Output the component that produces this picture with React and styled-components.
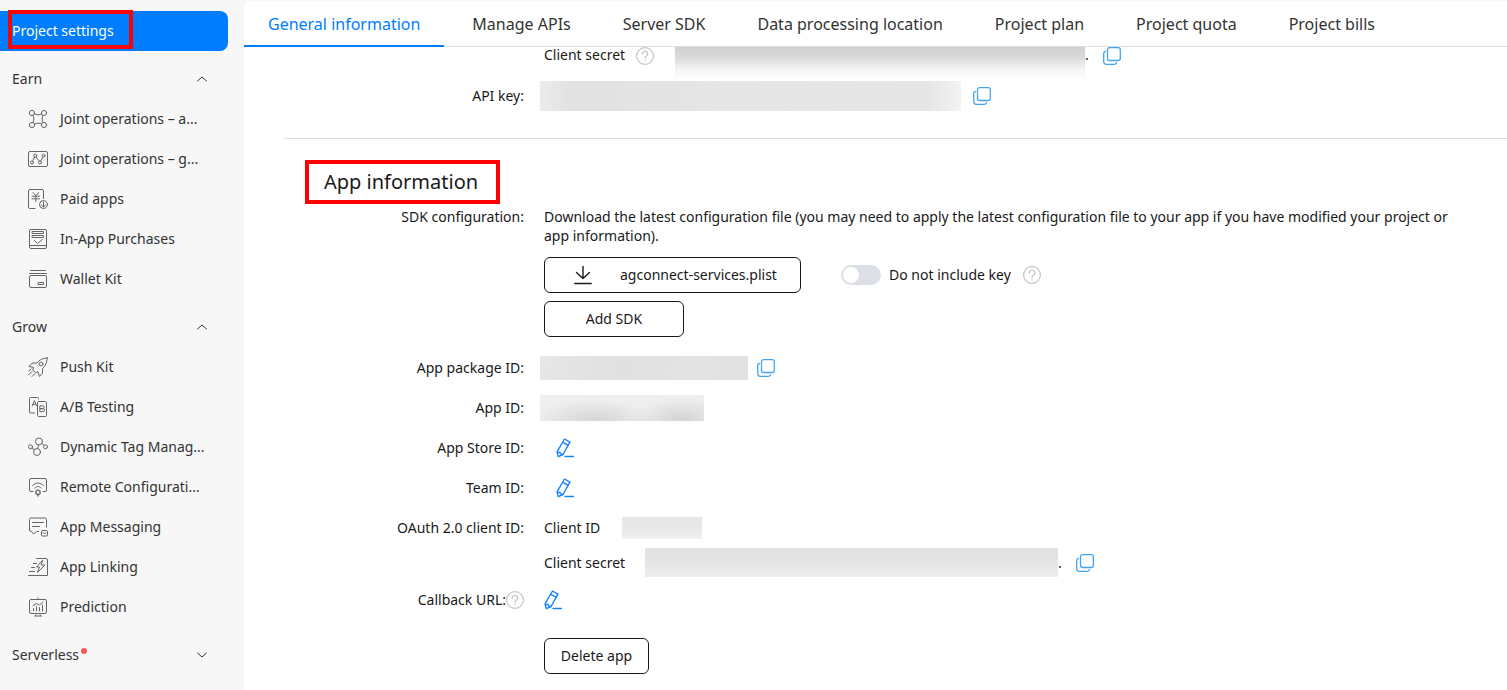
import { useState } from "react";
import styled, { createGlobalStyle } from "styled-components";

const strokeProps = {
  fill: "none",
  stroke: "currentColor",
  strokeLinecap: "round",
  strokeLinejoin: "round",
};

const sideIcons = {
  jointApps: (
    <>
      <circle cx="4" cy="4" r="2.6" />
      <circle cx="16" cy="4" r="2.6" />
      <circle cx="4" cy="16" r="2.6" />
      <circle cx="16" cy="16" r="2.6" />
      <path d="M6.500 5c2 1.200 5 1.200 7 0M6.500 15c2-1.200 5-1.200 7 0M5 6.500c1.200 2 1.200 5 0 7M15 6.500c-1.200 2-1.200 5 0 7" />
    </>
  ),
  jointGames: (
    <>
      <rect x="0.5" y="2.500" width="19" height="15" rx="1.500" />
      <circle cx="4" cy="13.500" r="1.500" />
      <circle cx="7.200" cy="6.700" r="1.500" />
      <circle cx="12" cy="13.500" r="1.500" />
      <circle cx="15.500" cy="6.700" r="1.500" />
      <path d="M4.600 12L6.600 8.200M8 8.200l3.300 4M12.600 12l2.200-3.900" />
    </>
  ),
  paid: (
    <>
      <path d="M7 19.500H2A1.500 1.500 0 0 1 .5 18V2A1.500 1.500 0 0 1 2 .5h12A1.500 1.500 0 0 1 15.500 2v7.500" />
      <path d="M5 3.500l2.800 3.200 2.800-3.200M4 7.200h7.600M4 9.800h7.600M7.800 6.700v6" />
      <circle cx="15.500" cy="15.500" r="4" />
      <path d="M15.500 13v5M13.700 16l1.800 2 1.800-2" />
    </>
  ),
  purchases: (
    <>
      <rect x="1.500" y="0.500" width="17" height="19" rx="1.500" />
      <path d="M1.500 16.500h17" />
      <rect x="4.500" y="2.500" width="11" height="2" />
      <rect x="4.500" y="6.500" width="11" height="2" />
      <path d="M6.500 11.500l3 3 5-4" />
    </>
  ),
  wallet: (
    <>
      <path d="M2.500 1.500h15M1.500 4.500h17" />
      <rect x="1.500" y="6.500" width="17" height="12" rx="1.500" />
      <rect x="10.500" y="13.500" width="5" height="2" />
    </>
  ),
  rocket: (
    <>
      <path d="M19.300.8c-5 .4-8 2.200-10.300 5.200L4 6.200 1 9.500l4.500 1-.8 2.500 2.700 2.500 2.500-.8 1.600 4.800 3-3.500.1-4.500c2.900-2.700 4.300-6 4.700-10.700z" />
      <circle cx="13" cy="7" r="1.900" />
      <path d="M4 14.500L.5 18M7 16.500l-3 3M3 12L.8 14.300" />
    </>
  ),
  ab: (
    <>
      <path d="M6.500 16H2.500A1 1 0 0 1 1.500 15V1.500a1 1 0 0 1 1-1H9.500a1 1 0 0 1 1 1V2" />
      <rect x="9.500" y="4.500" width="9" height="15" rx="1" />
      <path d="M4.200 9L6.400 3.500 8.600 9M5 7.300h2.800M12.200 8.800h2.500a1.400 1.400 0 0 1 0 2.900h-2.500zM12.200 11.700h2.900a1.500 1.500 0 0 1 0 3h-2.900z" />
    </>
  ),
  dynamicTag: (
    <>
      <circle cx="11" cy="4.500" r="3.500" />
      <circle cx="2.500" cy="9.800" r="2" />
      <circle cx="17.500" cy="9.800" r="2" />
      <circle cx="9" cy="15" r="3.500" />
      <path d="M10.500 8l-.8 3.500M4 11.200l2.200 1.600M14 6.500l2 1.800" />
    </>
  ),
  remote: (
    <>
      <path d="M5 14.500H3A1.500 1.500 0 0 1 1.500 13V3A1.500 1.500 0 0 1 3 1.500h14A1.500 1.500 0 0 1 18.500 3v10a1.500 1.500 0 0 1-1.500 1.500h-2" />
      <path d="M4.500 8.500c3.500-3.300 7.500-3.300 11 0M6.800 11c2.200-2 4.200-2 6.400 0" />
      <path d="M8 14.200l2-1.200 2 1.200v2.500l-2 1.200-2-1.200zM10 18v1" strokeWidth="1.400" />
    </>
  ),
  messaging: (
    <>
      <path d="M10.500 14.500H8.500L5.500 17l-2-2.500H3A1.500 1.500 0 0 1 1.500 13V2.500A1.500 1.500 0 0 1 3 1h14a1.500 1.500 0 0 1 1.500 1.500V10" />
      <path d="M4.500 5.500h11M4.500 9.500h7" />
      <rect x="13.500" y="13.500" width="6" height="5.500" rx="1" />
      <path d="M15 15.500l1.500 1.500 1.500-1.500" />
    </>
  ),
  linking: (
    <>
      <path d="M8.500 1.500h9.500A1.500 1.500 0 0 1 19.500 3v15.500H.5M5.500 6.500h3M3.500 10.500h3M1.500 14.500h5" />
      <path d="M14.500 3.500L8.500 10h3l-2 5.500 7.500-7.500h-3.500z" />
    </>
  ),
  prediction: (
    <>
      <rect x="1.500" y="2.500" width="17" height="14" rx="1.500" />
      <path d="M10 .8v1.700M8 18l-1.500 1h7L12 18M5.500 11.500v2.500M8.500 9.500v4.500M11.500 10.500v3.500M14.500 8v6M5 8.500l3.500-2 3 1.500 3.500-3" />
    </>
  ),
};

function SideIcon({ name }) {
  return (
    <svg width="20" height="20" viewBox="0 0 20 20" {...strokeProps} aria-hidden="true">
      {sideIcons[name]}
    </svg>
  );
}

function Chevron({ open }) {
  return (
    <svg width="10" height="6" viewBox="0 0 10 6" {...strokeProps} aria-hidden="true">
      <path d={open ? "M.5 5L5 1l4.500 4" : "M.5 1L5 5l4.500-4"} />
    </svg>
  );
}

function Copy() {
  return (
    <IconButton aria-label="Copy" $color="#41a5f5">
      <svg width="18" height="18" viewBox="0 0 18 18" {...strokeProps} strokeWidth="1.300">
        <rect x="4.500" y="0.700" width="12.800" height="12.800" rx="2" />
        <path d="M2.300 4.500A2 2 0 0 0 .7 6.500v8.300a2.500 2.500 0 0 0 2.500 2.500h8.300a2 2 0 0 0 2-1.600" />
      </svg>
    </IconButton>
  );
}

function Edit({ label }) {
  return (
    <IconButton aria-label={label} $color="#1784ff">
      <svg width="18" height="20" viewBox="0 0 18 20" {...strokeProps} strokeWidth="1.400">
        <path d="M8.500 1l5.500 3.200-7 12.300-4.600 2.200-1.400-4.800zM6.800 4.300l5.400 3M1.200 14.200l2.600.3 1.200 1.500 2 .5M9 18.500h8.500" />
      </svg>
    </IconButton>
  );
}

function Help() {
  return (
    <IconButton aria-label="Help" $color="#c4c4c4">
      <svg width="18" height="18" viewBox="0 0 18 18" {...strokeProps} strokeWidth="1.200">
        <circle cx="9" cy="9" r="8.400" />
        <path d="M6.300 7a2.700 2.700 0 1 1 3.900 2.300c-.8.500-1.200.9-1.200 2.100M9 13.500v.3" />
      </svg>
    </IconButton>
  );
}

const groups = [
  {
    title: "Earn",
    open: true,
    items: [
      ["jointApps", "Joint operations – a..."],
      ["jointGames", "Joint operations – g..."],
      ["paid", "Paid apps"],
      ["purchases", "In-App Purchases"],
      ["wallet", "Wallet Kit"],
    ],
  },
  {
    title: "Grow",
    open: true,
    items: [
      ["rocket", "Push Kit"],
      ["ab", "A/B Testing"],
      ["dynamicTag", "Dynamic Tag Manag..."],
      ["remote", "Remote Configurati..."],
      ["messaging", "App Messaging"],
      ["linking", "App Linking"],
      ["prediction", "Prediction"],
    ],
  },
  { title: "Serverless", open: false, dot: true, items: [] },
];

const tabs = [
  "General information",
  "Manage APIs",
  "Server SDK",
  "Data processing location",
  "Project plan",
  "Project quota",
  "Project bills",
];

export default function App() {
  const [tab, setTab] = useState(tabs[0]);
  const [noKey, setNoKey] = useState(false);

  return (
    <Page>
      <GlobalStyle />
      <Sidebar>
        <ProjectLink href="#settings">
          Project settings
          <Marker />
        </ProjectLink>
        {groups.map((group) => (
          <Group key={group.title}>
            <GroupHeader aria-expanded={group.open}>
              <GroupTitle>
                {group.title}
                {group.dot && <Dot />}
              </GroupTitle>
              <Chevron open={group.open} />
            </GroupHeader>
            {group.items.map(([icon, label]) => (
              <SideLink key={label} href={"#" + icon}>
                <SideIcon name={icon} />
                {label}
              </SideLink>
            ))}
          </Group>
        ))}
      </Sidebar>

      <Main>
        <Tabs role="tablist">
          {tabs.map((name) => (
            <Tab
              key={name}
              role="tab"
              aria-selected={tab === name}
              $active={tab === name}
              onClick={() => setTab(name)}
            >
              {name}
            </Tab>
          ))}
        </Tabs>

        <Content>
          <SecretRow>
            <Label />
            <SecretName>Client secret</SecretName>
            <Help />
            <Redacted $width={410} $height={31} $tone="fade" $gap={21} />
            <Period>.</Period>
            <Copy />
          </SecretRow>
          <KeyRow>
            <Label>API key:</Label>
            <Value>
              <Redacted $width={421} $height={30} $tone="soft" $outdent />
              <AfterValue $gap={12}>
                <Copy />
              </AfterValue>
            </Value>
          </KeyRow>

          <Divider />
          <Heading>App information</Heading>

          <TopRow>
            <Label>SDK configuration:</Label>
            <Stack>
              <Description>
                Download the latest configuration file (you may need to apply the latest
                configuration file to your app if you have modified your project or app
                information).
              </Description>
              <Downloads>
                <DownloadButton>
                  <svg width="18" height="20" viewBox="0 0 18 20" {...strokeProps} strokeWidth="1.400" aria-hidden="true">
                    <path d="M9 1.500v12M2.500 7.500L9 13.500l6.500-6M.8 18.500h16.400" />
                  </svg>
                  agconnect-services.plist
                </DownloadButton>
                <SwitchLabel>
                  <Switch
                    type="checkbox"
                    role="switch"
                    checked={noKey}
                    onChange={(e) => setNoKey(e.target.checked)}
                  />
                  Do not include key
                </SwitchLabel>
                <Help />
              </Downloads>
              <OutlineButton $width={140}>Add SDK</OutlineButton>
            </Stack>
          </TopRow>

          <Row>
            <Label>App package ID:</Label>
            <Value>
              <Redacted $width={208} $height={24} $tone="flat" $outdent />
              <AfterValue $gap={9}>
                <Copy />
              </AfterValue>
            </Value>
          </Row>
          <Row>
            <Label>App ID:</Label>
            <Value>
              <Redacted $width={164} $height={26} $tone="blobs" $outdent />
            </Value>
          </Row>
          <Row>
            <Label>App Store ID:</Label>
            <Value>
              <AfterValue $gap={12}>
                <Edit label="Edit App Store ID" />
              </AfterValue>
            </Value>
          </Row>
          <Row>
            <Label>Team ID:</Label>
            <Value>
              <AfterValue $gap={12}>
                <Edit label="Edit Team ID" />
              </AfterValue>
            </Value>
          </Row>
          <Row>
            <Label>OAuth 2.0 client ID:</Label>
            <Value>
              <ClientName $width={78}>Client ID</ClientName>
              <Redacted $width={80} $height={22} $tone="light" />
            </Value>
          </Row>
          <ClientSecretRow>
            <Label />
            <Value>
              <ClientName $width={101}>Client secret</ClientName>
              <Redacted $width={413} $height={29} $tone="secret" />
              <Period>.</Period>
              <Copy />
            </Value>
          </ClientSecretRow>
          <Row>
            <Label>
              Callback URL:
              <Help />
            </Label>
            <Value>
              <Edit label="Edit callback URL" />
            </Value>
          </Row>
          <Footer>
            <Label />
            <OutlineButton $width={105}>Delete app</OutlineButton>
          </Footer>
        </Content>
      </Main>
    </Page>
  );
}

const GlobalStyle = createGlobalStyle`
  * {
    box-sizing: border-box;
  }
  body {
    margin: 0;
    background: #f7f7f7;
    color: #191919;
    font-family: "Noto Sans", "Open Sans", sans-serif;
    font-size: 14px;
    line-height: 20px;
  }
  button {
    font: inherit;
    color: inherit;
    cursor: pointer;
  }
  a {
    color: inherit;
    text-decoration: none;
  }
  svg {
    display: block;
    flex-shrink: 0;
  }
`;

const Page = styled.div`
  display: flex;
  height: 100vh;
  overflow: hidden;
`;

const Sidebar = styled.nav`
  display: flex;
  flex-direction: column;
  gap: 8px;
  flex: 0 0 244px;
  padding: 11px 16px 0 0;
  color: #333;
`;

const ProjectLink = styled.a`
  position: relative;
  display: flex;
  align-items: center;
  height: 40px;
  padding-left: 12px;
  border-radius: 0 8px 8px 0;
  background: #007dff;
  color: #fff;
`;

const Marker = styled.span`
  position: absolute;
  top: -1px;
  left: 8px;
  width: 125px;
  height: 39px;
  border: 4px solid #f00;
`;

const Group = styled.div`
  display: flex;
  flex-direction: column;
`;

const GroupHeader = styled.button`
  display: flex;
  align-items: center;
  justify-content: space-between;
  height: 40px;
  padding: 0 21px 0 12px;
  border: 0;
  background: none;
`;

const GroupTitle = styled.span`
  display: flex;
  gap: 2px;
`;

const Dot = styled.span`
  width: 6px;
  height: 6px;
  margin-top: 3px;
  border-radius: 50%;
  background: #fa5555;
`;

const SideLink = styled.a`
  display: flex;
  align-items: center;
  gap: 12px;
  height: 40px;
  padding-left: 28px;
  white-space: nowrap;

  svg {
    color: #666;
  }
`;

const Main = styled.main`
  flex: 1;
  min-width: 0;
  margin-top: 1px;
  border-radius: 8px 0 0 0;
  background: #fff;
`;

const Tabs = styled.div`
  display: flex;
  gap: 4px;
  height: 46px;
  border-bottom: 1px solid #ddd;
`;

const Tab = styled.button`
  height: 46px;
  padding: 2px 24px 0;
  border: 0;
  border-bottom: 2px solid ${({ $active }) => ($active ? "#007dff" : "transparent")};
  background: none;
  color: ${({ $active }) => ($active ? "#007dff" : "#333")};
  font-size: 16px;
  white-space: nowrap;
`;

const Content = styled.div`
  padding-left: 40px;
`;

const Row = styled.div`
  display: flex;
  align-items: center;
  gap: 20px;
  height: 40px;
`;

const SecretRow = styled.div`
  display: flex;
  align-items: flex-start;
  height: 34px;
`;

const SecretName = styled.span`
  width: 92px;
  margin-left: 20px;
  line-height: 16px;
`;

const KeyRow = styled(Row)`
  height: 30px;
`;

const TopRow = styled.div`
  display: flex;
  gap: 20px;
  margin: 3px 0 11px;
`;

const ClientSecretRow = styled(Row)`
  height: 32px;
  padding-bottom: 3px;
`;

const Footer = styled(Row)`
  height: 36px;
  margin-top: 18px;
`;

const Label = styled.div`
  display: flex;
  justify-content: flex-end;
  flex: 0 0 240px;
`;

const Value = styled.div`
  display: flex;
  align-items: center;
`;

const AfterValue = styled.span`
  display: flex;
  padding-left: ${({ $gap }) => $gap}px;
`;

const ClientName = styled.span`
  width: ${({ $width }) => $width}px;
`;

const Period = styled.span`
  width: 18px;
  line-height: 16px;
`;

const tones = {
  fade: "linear-gradient(180deg, #d0d0d0 0%, #dadada 35%, #f6f6f6 75%, #fcfcfc 100%)",
  soft: "linear-gradient(90deg, #ececec 0%, #e1e1e1 8%, #e6e6e6 45%, #e5e5e5 92%, #f3f3f3 100%)",
  light: "linear-gradient(180deg, #e6e6e6, #e9e9e9 60%, #f1f1f1)",
  secret: "linear-gradient(180deg, #e1e2e1 0%, #e4e4e4 50%, #efefef 100%)",
  flat: "linear-gradient(100deg, #e7e7e7 0%, #e0e0e0 40%, #e3e4e4 75%, #e0e0e1 100%)",
  blobs:
    "radial-gradient(ellipse 60px 22px at 33% 100%, #d4d4d4, transparent), radial-gradient(ellipse 50px 24px at 86% 100%, #d2d3d4, transparent), #efefef",
};

const Redacted = styled.span`
  flex-shrink: 0;
  width: ${({ $width }) => $width}px;
  height: ${({ $height }) => $height}px;
  margin-left: ${({ $outdent, $gap = 0 }) => ($outdent ? -4 : $gap)}px;
  background: ${({ $tone }) => tones[$tone]};
`;

const IconButton = styled.button`
  padding: 0;
  border: 0;
  background: none;
  color: ${({ $color }) => $color};
`;

const Divider = styled.hr`
  height: 1px;
  margin: 27px 0 21px;
  border: 0;
  background: #ddd;
`;

const Heading = styled.h2`
  width: fit-content;
  margin: 0 0 0 21px;
  padding: 4px 18px 4px 15px;
  border: 4px solid #f00;
  font-size: 20px;
  font-weight: 400;
  line-height: 28px;
`;

const Stack = styled.div`
  display: flex;
  flex-direction: column;
  align-items: flex-start;
  gap: 8px;
  flex: 1;
  min-width: 0;
  padding-right: 32px;
`;

const Description = styled.p`
  margin: 0 0 4px;
  line-height: 19px;
`;

const Downloads = styled.div`
  display: flex;
  align-items: center;
`;

const OutlineButton = styled.button`
  width: ${({ $width }) => $width}px;
  height: 36px;
  padding: 0;
  border: 1px solid #191919;
  border-radius: 6px;
  background: #fff;
  white-space: nowrap;
`;

const DownloadButton = styled(OutlineButton)`
  display: flex;
  align-items: center;
  gap: 28px;
  width: 257px;
  padding-left: 29px;
`;

const SwitchLabel = styled.label`
  display: flex;
  align-items: center;
  gap: 8px;
  margin: 0 12px 0 40px;
`;

const Switch = styled.input`
  appearance: none;
  width: 40px;
  height: 20px;
  margin: 0;
  padding: 2px;
  border-radius: 10px;
  background: ${({ checked }) => (checked ? "#007dff" : "#dcdfe6")};

  &::before {
    content: "";
    display: block;
    width: 16px;
    height: 16px;
    margin-left: ${({ checked }) => (checked ? 20 : 0)}px;
    border-radius: 50%;
    background: #fff;
  }
`;
